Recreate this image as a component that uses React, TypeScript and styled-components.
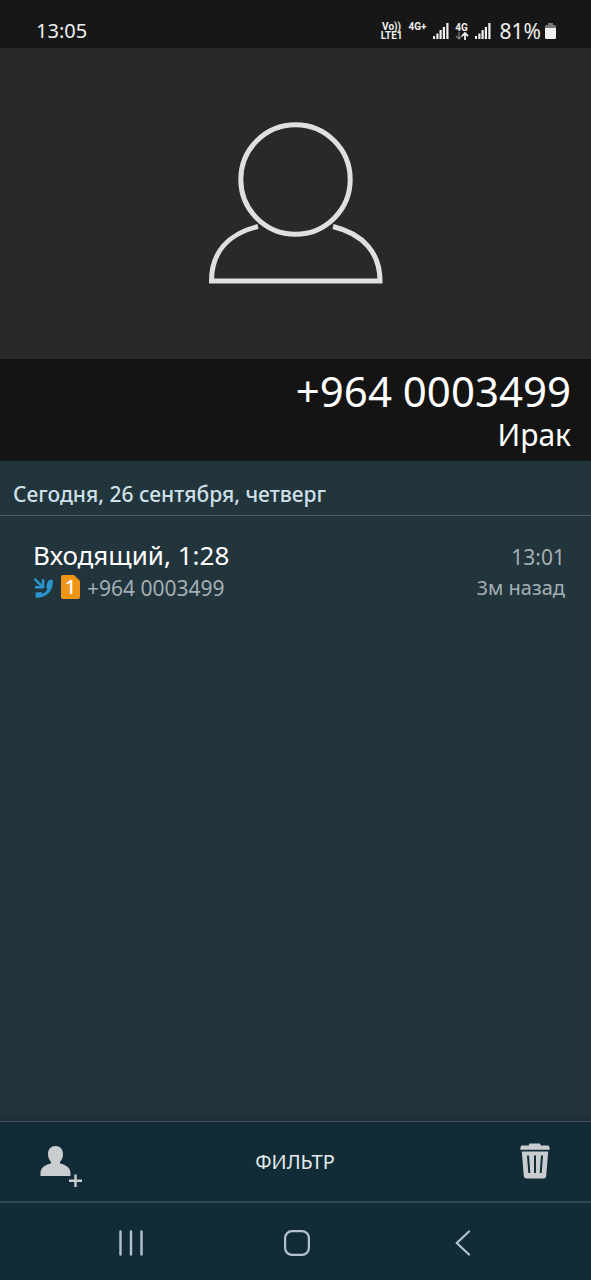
import React from 'react';
import styled, { createGlobalStyle } from 'styled-components';

const GlobalStyle = createGlobalStyle`
  *, *::before, *::after { box-sizing: border-box; }
  body { margin: 0; background: #22343c; }
  h1, h2, p { margin: 0; font-weight: 400; }
  button { font: inherit; color: inherit; border: 0; padding: 0; background: none; cursor: pointer; }
  svg { display: block; flex: none; }
`;

const Screen = styled.div`
  min-height: 100vh;
  display: flex;
  flex-direction: column;
  background: #22343c;
  color: #fff;
  font-family: 'Noto Sans', sans-serif;
`;

const StatusBar = styled.header`
  display: flex;
  align-items: center;
  justify-content: space-between;
  height: 48px;
  padding: 14px 34px 0 36px;
  background: #171717;
  color: #f0f0f0;
  font-size: 20px;
  line-height: 32px;
`;

const StatusIcons = styled.div`
  display: flex;
  align-items: center;
  gap: 6px;
`;

const NetworkLabel = styled.span<{ $raised?: boolean }>`
  display: flex;
  flex-direction: column;
  align-items: center;
  padding-bottom: ${({ $raised }) => ($raised ? '9px' : '0')};
  font-family: Roboto, sans-serif;
  font-weight: 700;
  font-size: 10px;
  line-height: 9px;
`;

const Battery = styled.span`
  display: flex;
  align-items: center;
  gap: 3px;
  padding-left: 3px;
  font-size: 21px;
`;

const Portrait = styled.section`
  display: flex;
  justify-content: center;
  padding: 74px 0 75px;
  background: #292929;
`;

const Identity = styled.section`
  display: flex;
  flex-direction: column;
  align-items: flex-end;
  padding: 8px 20px 7px;
  background: #141414;
`;

const PhoneNumber = styled.h1`
  font-size: 42px;
  line-height: 48px;
`;

const Country = styled.p`
  font-size: 30px;
  line-height: 39px;
`;

const History = styled.main`
  flex: 1;
`;

const DayHeading = styled.h2`
  padding: 18px 13px 6px;
  border-bottom: 1px solid #4c5d65;
  color: #cfe0e8;
  font-size: 21px;
  font-weight: 500;
  line-height: 30px;
`;

const CallRow = styled.article`
  display: flex;
  justify-content: space-between;
  padding: 22px 26px 0 33px;
`;

const CallColumn = styled.div<{ $end?: boolean }>`
  display: flex;
  flex-direction: column;
  align-items: ${({ $end }) => ($end ? 'flex-end' : 'flex-start')};
`;

const CallTitle = styled.p`
  font-size: 26px;
  line-height: 35px;
`;

const CallTime = styled.time`
  padding-top: 3px;
  color: #a3afb5;
  font-size: 21px;
  line-height: 32px;
`;

const CallDetail = styled.p<{ $small?: boolean }>`
  display: flex;
  align-items: center;
  color: #a3afb5;
  font-size: ${({ $small }) => ($small ? '20px' : '21px')};
  line-height: 30px;
`;

const SimBadge = styled.span`
  display: grid;
  place-items: center;
  width: 19px;
  height: 24px;
  margin: 0 7px 2px 8px;
  border-radius: 2px;
  background: #ee9416;
  clip-path: polygon(0 0, 13px 0, 100% 6px, 100% 100%, 0 100%);
  color: #fff;
  font-size: 20px;
  font-weight: 500;
  line-height: 24px;
`;

const Toolbar = styled.footer`
  display: grid;
  grid-template-columns: 1fr auto 1fr;
  align-items: center;
  height: 80px;
  padding: 0 41px 0 40px;
  border-top: 1px solid #3a4f58;
  background: #112c36;
  box-shadow: 0 -2px 6px rgba(0, 0, 0, 0.2);
`;

const ToolButton = styled.button<{ $end?: boolean }>`
  justify-self: ${({ $end }) => ($end ? 'end' : 'start')};
  padding: ${({ $end }) => ($end ? '0 0 2px' : '9px 0 0')};
  color: #c9cdcf;
`;

const FilterButton = styled.button`
  color: #e4eaed;
  font-size: 20px;
  line-height: 28px;
`;

const SystemNav = styled.nav`
  display: flex;
  justify-content: space-around;
  align-items: center;
  height: 79px;
  padding: 2px 45px 0 48px;
  border-top: 2px solid #2f4852;
  background: #112c36;
  color: #b4c3cb;
`;

const NavButton = styled.button`
  display: grid;
  place-items: center;
  flex: 1;
  height: 48px;
`;

const SignalIcon = () => (
  <svg width="16" height="16" viewBox="0 0 16 16" fill="currentColor" aria-hidden="true">
    <path d="M0 13h2v3H0zM3.300 10.500h2.200v5.500h-2.200zM6.500 7h2.200v9h-2.200zM9.800 4H12v12H9.800zM13.300 0h2.200v16h-2.200z" />
  </svg>
);

const DataArrows = () => (
  <svg width="14" height="8" viewBox="0 0 14 8" fill="none" aria-hidden="true">
    <path d="M4 0v7M1 4l3 3 3-3" stroke="#858585" strokeWidth="1.2" />
    <path d="M10 8V1M7 4l3-3 3 3" stroke="#f0f0f0" strokeWidth="1.8" />
  </svg>
);

const BatteryIcon = () => (
  <svg width="13" height="18" viewBox="0 0 13 18" aria-hidden="true">
    <path d="M4 1h5v2h2l1 1v3H1V4l1-1h2z" fill="#777" />
    <path d="M1 6h11v9.500q0 1.500-1.500 1.500h-8Q1 17 1 15.500z" fill="#f0f0f0" />
  </svg>
);

const PersonIcon = () => (
  <svg width="176" height="162" viewBox="0 0 176 162" fill="none" stroke="#e0e0e0" strokeWidth="5" aria-hidden="true">
    <circle cx="87.500" cy="57.500" r="54.700" />
    <path d="M50 104.500C19.500 112 3.500 131 3.500 159h168.500c0-28-16.500-47-47-54.500" />
  </svg>
);

const IncomingIcon = () => (
  <svg width="20" height="21" viewBox="0 0 20 21" fill="none" aria-hidden="true">
    <path d="M1.500 .8l7 7M10 1.200v8H2" stroke="#2a96cc" strokeWidth="2.500" />
    <path
      d="M15.500 2.400q2-.8 4.200-.4 1 7.500-4 13Q10.500 20 3 19.700q-.9-2.500-.3-5.300l5.600-.3 1 2q3.400-1.400 5.200-5l-1.200-1.600q.3-4.500 2.200-7.100z"
      fill="#2a96cc"
    />
  </svg>
);

const AddContactIcon = () => (
  <svg width="42" height="42" viewBox="0 0 42 42" aria-hidden="true">
    <path
      d="M15.500 1C20 1 23 4 23 9c0 4-1.500 6-3 8v1.500C26 20 30.500 22.500 30.500 28v3H.500v-3C.5 22.500 5 20 11 18.500V17C9.500 15 8 13 8 9c0-5 3-8 7.500-8z"
      fill="currentColor"
    />
    <path d="M35.500 29.500v12.500M29 35.700h13" stroke="currentColor" strokeWidth="2.400" />
  </svg>
);

const TrashIcon = () => (
  <svg width="30" height="36" viewBox="0 0 30 36" aria-hidden="true">
    <path d="M9 2.500V1.500Q9 .5 10 .5h9.500q1 0 1 1v1H28q1.500 0 1.800 4.200H.2Q.5 2.500 2 2.500z" fill="currentColor" />
    <path d="M1.800 8.500h26.400l-2 24.500q-.2 2.500-2.700 2.500h-17Q4 35.500 3.800 33z" fill="currentColor" />
    <path d="M8 12.500l1.300 17.500M15 12.500V30M22 12.500L20.700 30" stroke="#112c36" strokeWidth="2" fill="none" />
  </svg>
);

export default function App() {
  return (
    <Screen>
      <GlobalStyle />
      <StatusBar>
        <time>13:05</time>
        <StatusIcons>
          <NetworkLabel>
            <span>Vo))</span>
            <span>LTE1</span>
          </NetworkLabel>
          <NetworkLabel $raised>4G+</NetworkLabel>
          <SignalIcon />
          <NetworkLabel>
            <span>4G</span>
            <DataArrows />
          </NetworkLabel>
          <SignalIcon />
          <Battery>
            81%
            <BatteryIcon />
          </Battery>
        </StatusIcons>
      </StatusBar>

      <Portrait>
        <PersonIcon />
      </Portrait>
      <Identity>
        <PhoneNumber>+964 0003499</PhoneNumber>
        <Country>Ирак</Country>
      </Identity>

      <History>
        <DayHeading>Сегодня, 26 сентября, четверг</DayHeading>
        <CallRow>
          <CallColumn>
            <CallTitle>Входящий, 1:28</CallTitle>
            <CallDetail>
              <IncomingIcon />
              <SimBadge>1</SimBadge>
              +964 0003499
            </CallDetail>
          </CallColumn>
          <CallColumn $end>
            <CallTime>13:01</CallTime>
            <CallDetail $small>3м назад</CallDetail>
          </CallColumn>
        </CallRow>
      </History>

      <Toolbar>
        <ToolButton aria-label="Добавить контакт">
          <AddContactIcon />
        </ToolButton>
        <FilterButton>ФИЛЬТР</FilterButton>
        <ToolButton $end aria-label="Удалить">
          <TrashIcon />
        </ToolButton>
      </Toolbar>

      <SystemNav>
        <NavButton aria-label="Недавние">
          <svg width="26" height="26" viewBox="0 0 26 26" stroke="currentColor" strokeWidth="2.400" strokeLinecap="round" aria-hidden="true">
            <path d="M2.500 1.500v23M13 1.500v23M23.500 1.500v23" />
          </svg>
        </NavButton>
        <NavButton aria-label="Главный экран">
          <svg width="26" height="26" viewBox="0 0 26 26" fill="none" stroke="currentColor" strokeWidth="2.200" aria-hidden="true">
            <rect x="1.100" y="1.100" width="23.800" height="23.800" rx="7" />
          </svg>
        </NavButton>
        <NavButton aria-label="Назад">
          <svg width="16" height="26" viewBox="0 0 16 26" fill="none" stroke="currentColor" strokeWidth="2.200" strokeLinecap="round" aria-hidden="true">
            <path d="M14 1.500L1.800 13 14 24.500" />
          </svg>
        </NavButton>
      </SystemNav>
    </Screen>
  );
}
